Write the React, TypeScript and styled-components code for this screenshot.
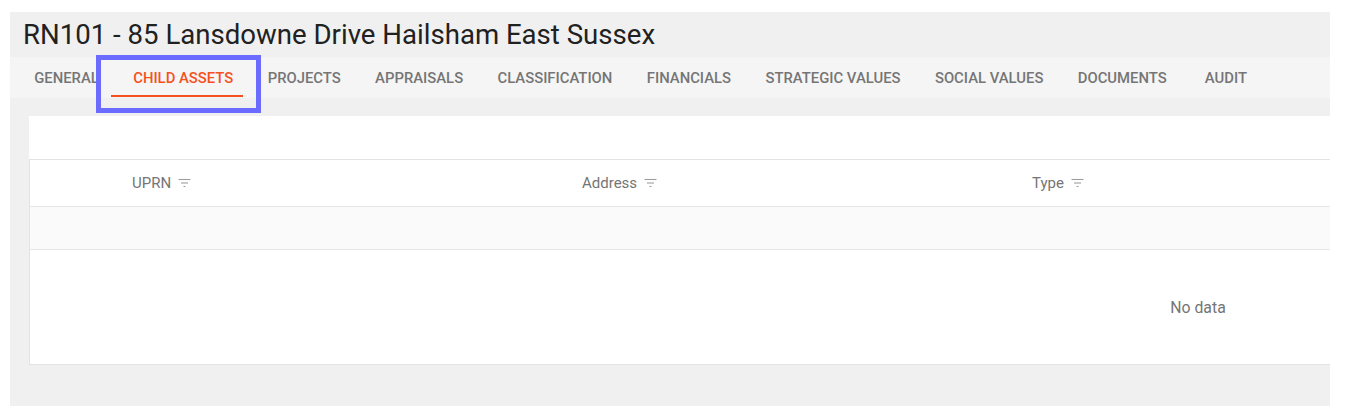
import React from "react";
import styled, { createGlobalStyle } from "styled-components";

const GlobalStyle = createGlobalStyle`
  html, body {
    margin: 0;
    padding: 0;
    background: #ffffff;
    font-family: Roboto, "Liberation Sans", Arial, sans-serif;
  }
`;

const Screen = styled.div`
  padding: 12px 15px 0 10px;
`;

const Panel = styled.div`
  background: #f0f0f0;
  height: 394px;
  overflow: hidden;
`;

const Title = styled.h1`
  margin: 0;
  height: 45px;
  padding-left: 13px;
  display: flex;
  align-items: center;
  font-size: 27.6px;
  font-weight: 400;
  color: #212121;
  white-space: nowrap;
`;

const TabBar = styled.nav`
  height: 41px;
  display: flex;
  align-items: stretch;
  padding-left: 7px;
  background: #f5f5f5;
`;

const Tab = styled.div<{ $active?: boolean }>`
  position: relative;
  box-sizing: border-box;
  display: flex;
  align-items: center;
  justify-content: center;
  min-width: 84px;
  padding: 0 17.2px;
  font-size: 14.85px;
  font-weight: 500;
  text-transform: uppercase;
  white-space: nowrap;
  color: ${(p) => (p.$active ? "#f4511e" : "#757575")};

  ${(p) =>
    p.$active &&
    `
    &::after {
      content: "";
      position: absolute;
      left: -5px;
      right: 7px;
      bottom: 1px;
      height: 2px;
      background: #f4511e;
    }
  `}
`;

/* annotation frame drawn over the active tab */
const Highlight = styled.span`
  position: absolute;
  left: -20px;
  right: -11px;
  top: -2px;
  bottom: -15px;
  border: 5px solid #6b6bff;
  pointer-events: none;
  z-index: 2;
`;

const Card = styled.section`
  margin: 18px 0 0 19px;
  background: #ffffff;
  overflow: hidden;
`;

const Toolbar = styled.div`
  height: 43px;
`;

const Table = styled.div`
  width: 2336px;
  border-left: 1px solid #e3e3e3;
  border-bottom: 1px solid #e3e3e3;
  border-top: 1px solid #e3e3e3;
`;

const HeadRow = styled.div`
  display: grid;
  grid-template-columns: 86px 450px 450px 1350px;
  height: 46px;
  border-bottom: 1px solid #e6e6e6;
`;

const HeadCell = styled.div`
  display: flex;
  align-items: center;
  gap: 7px;
  padding-left: 16px;
  font-size: 15px;
  color: #757575;
`;

const FilterRow = styled.div`
  height: 42px;
  background: #fafafa;
  border-bottom: 1px solid #e6e6e6;
`;

const Empty = styled.div`
  height: 114px;
  display: flex;
  align-items: center;
  justify-content: center;
  font-size: 15.8px;
  color: #757575;
`;

const FilterIcon = () => (
  <svg width="13" height="10" viewBox="0 0 13 10" fill="none" stroke="#9e9e9e" strokeWidth="1.1">
    <line x1="0.5" y1="1.5" x2="12.5" y2="1.5" />
    <line x1="3" y1="5" x2="10" y2="5" />
    <line x1="5.5" y1="8.5" x2="7.5" y2="8.5" />
  </svg>
);

const tabs = [
  "General",
  "Child Assets",
  "Projects",
  "Appraisals",
  "Classification",
  "Financials",
  "Strategic Values",
  "Social Values",
  "Documents",
  "Audit",
];

const columns = ["UPRN", "Address", "Type"];

const App: React.FC = () => {
  const active = "Child Assets";

  return (
    <Screen>
      <GlobalStyle />
      <Panel>
        <Title>RN101 - 85 Lansdowne Drive Hailsham East Sussex</Title>

        <TabBar>
          {tabs.map((t) => (
            <Tab key={t} $active={t === active}>
              {t}
              {t === active && <Highlight />}
            </Tab>
          ))}
        </TabBar>

        <Card>
          <Toolbar />
          <Table>
            <HeadRow>
              <div />
              {columns.map((c) => (
                <HeadCell key={c}>
                  {c}
                  <FilterIcon />
                </HeadCell>
              ))}
            </HeadRow>
            <FilterRow />
            <Empty>No data</Empty>
          </Table>
        </Card>
      </Panel>
    </Screen>
  );
};

export default App;
